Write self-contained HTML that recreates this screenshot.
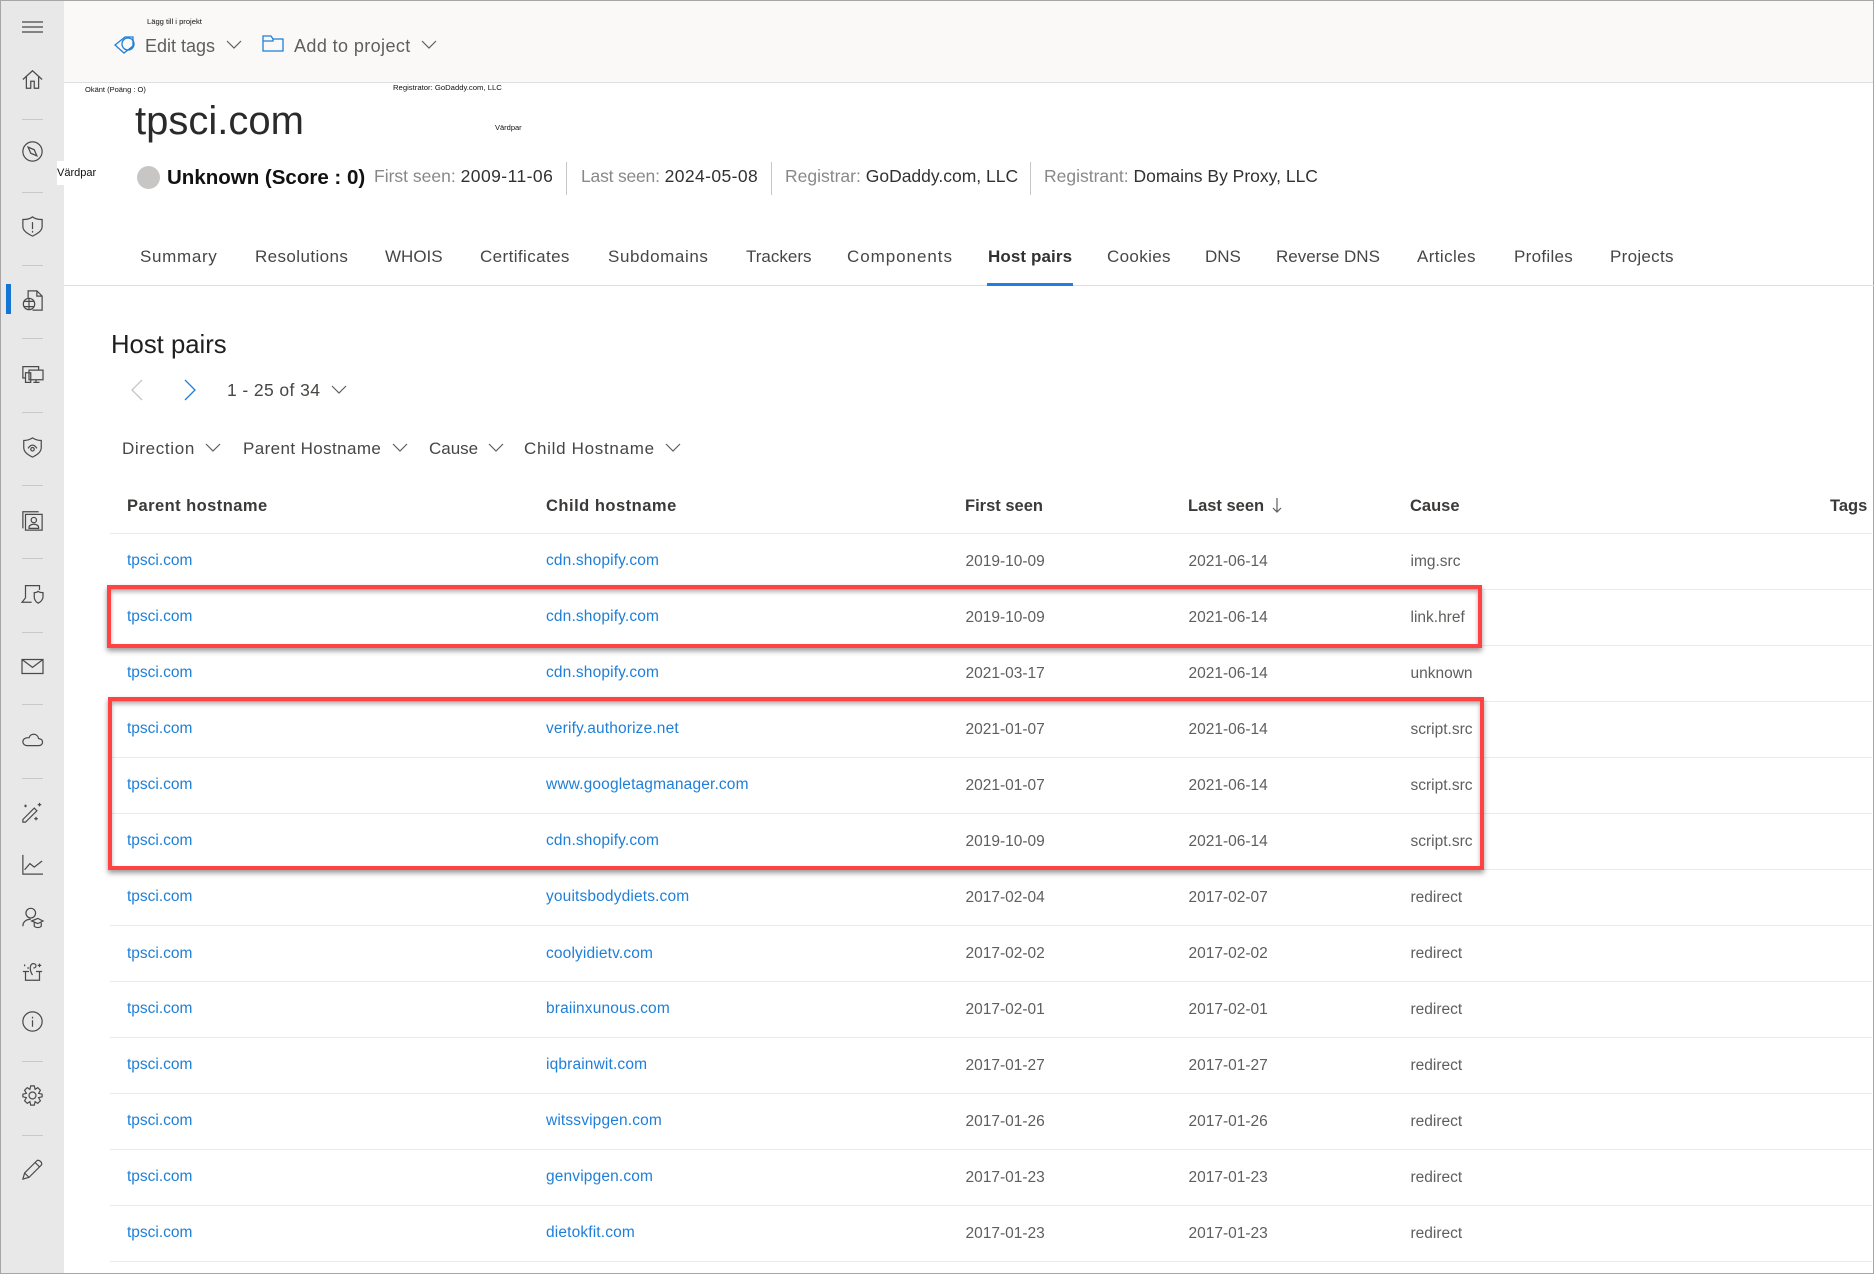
<!DOCTYPE html>
<html lang="en"><head><meta charset="utf-8"><title>tpsci.com - Host pairs</title>
<style>
html,body{margin:0;padding:0;background:#fff}
#p{position:relative;width:1874px;height:1274px;overflow:hidden;background:#fff;font-family:"Liberation Sans",sans-serif;color:#605e5c;font-size:16px}
#p>*{position:absolute}
.t{white-space:nowrap;line-height:24px;height:24px}
.h{background:#edebe9;height:1px;left:110px;width:1762px}
.l{color:#1f7fd8;font-size:15.5px;margin-top:.5px}
.ch{letter-spacing:.15px}
.g{font-size:15.5px;color:#605e5c;margin-top:1px;margin-left:.5px}
.b{font-weight:bold;color:#3b3a39;font-size:16.5px}
.n{font-size:17px;color:#484644;top:245px}
.f{font-size:17px;color:#484644;top:437px}
.d{background:#c8c8c8;height:1px;left:22px;width:21px}
svg{fill:none;stroke:#484644;stroke-width:1.3;overflow:visible}
svg.i{left:22px;stroke-width:1.4;stroke:#4a4a4a}
.c{stroke:#605e5c;stroke-width:1.2}
.r{border:4px solid #ff4343;box-shadow:0 3px 5px rgba(0,0,0,.4),inset 0 3px 4px rgba(0,0,0,.3);box-sizing:border-box}
.s{color:#8a8886}
</style></head><body><div id="p">

<div style="left:0;top:0;width:64px;height:1274px;background:#e8e8e8"></div>
<div style="left:64px;top:0;width:1810px;height:82px;background:#faf9f8;border-bottom:1px solid #e1dfdd"></div>
<div style="left:0;top:0;width:1874px;height:1px;background:#a6a6a6"></div>
<div style="left:0;top:0;width:1px;height:1274px;background:#a6a6a6"></div>
<div style="left:1873px;top:0;width:1px;height:1274px;background:#a6a6a6"></div>
<div style="left:0;top:1273px;width:1874px;height:1px;background:#a6a6a6"></div>

<!-- sidebar -->
<div style="left:6px;top:284px;width:5px;height:30px;background:#1476d2"></div>
<div class="d" style="top:119px"></div><div class="d" style="top:192px"></div><div class="d" style="top:265px"></div><div class="d" style="top:338px"></div><div class="d" style="top:412px"></div><div class="d" style="top:485px"></div><div class="d" style="top:558px"></div><div class="d" style="top:632px"></div><div class="d" style="top:704px"></div><div class="d" style="top:778px"></div><div class="d" style="top:1061px"></div><div class="d" style="top:1135px"></div>

<svg style="left:21px;top:16px" width="24" height="24"><path d="M1 6H22M1 11H22M1 16H22"/></svg>
<svg class="i" style="top:69px" width="21" height="21" viewBox="0 0 24 24"><path d="M1 12L12 2L23 12M5 9V22H10V14H14V22H19V9"/></svg>
<svg class="i" style="top:141px" width="21" height="21" viewBox="0 0 24 24"><circle cx="12" cy="12" r="11"/><path d="M7 7L14 10L17 17L10 14Z"/></svg>
<svg class="i" style="top:216px" width="21" height="21" viewBox="0 0 24 24"><path d="M12 1C15 3.500 18 4 23 4V12C23 17 18 20 12 23C6 20 1 17 1 12V4C6 4 9 3.500 12 1ZM12 7V15M12 17V19"/></svg>
<svg class="i" style="top:290px" width="21" height="21" viewBox="0 0 24 24"><path d="M7 9V1H17L23 7V23H12M17 1V7H23"/><circle cx="8" cy="16" r="6.500"/><path d="M8 9.500V22.500M2 13H14M2 19H14"/></svg>
<svg class="i" style="top:364px" width="21" height="21" viewBox="0 0 24 24"><path d="M4 16H1V3H19V7M8 7H24V18H8ZM4 10H10V21H4ZM13 21H20M16 18V21"/></svg>
<svg class="i" style="top:437px" width="21" height="21" viewBox="0 0 24 24"><path d="M12 1C15 3 18 4 22 4V12C22 17 18 20 12 23C6 20 2 17 2 12V4C6 4 9 3 12 1ZM7 13C10 8 14 8 17 13"/><circle cx="12" cy="14" r="2"/></svg>
<svg class="i" style="top:510px" width="21" height="21" viewBox="0 0 24 24"><path d="M1 21V2H19M4 5H23V23H4ZM8 20C8 15 19 15 19 20V21H8Z"/><circle cx="13.500" cy="11.500" r="3"/></svg>
<svg class="i" style="top:583px" width="21" height="21" viewBox="0 0 24 24"><path d="M4 17V3H20V8M4 17L0 22H11M14 11C16 11 18 10 18.500 9.500C19 10 21 11 24 11V16C24 19 21 22 18.500 23C16 22 14 19 14 16Z"/></svg>
<svg class="i" style="top:656px" width="21" height="21" viewBox="0 0 24 24"><path d="M0 4H24V20H0ZM0 4L12 13L24 4"/></svg>
<svg class="i" style="top:729px" width="21" height="21" viewBox="0 0 24 24"><path d="M6 19H19C25 19 25 11 19 11C18 5 10 4 8 10C-1 9 -1 19 6 19Z"/></svg>
<svg class="i" style="top:802px" width="21" height="21" viewBox="0 0 24 24"><path d="M1 20L14 7L17 10L4 23L1 23ZM4 3V6M2.500 4.500H5.500M20 1V5M18 3H22M16 17V21M14 19H18"/></svg>
<svg class="i" style="top:854px" width="21" height="21" viewBox="0 0 24 24"><path d="M1 1V23H24M3 18L9 11L14 15L23 8"/></svg>
<svg class="i" style="top:907px" width="21" height="21" viewBox="0 0 24 24"><circle cx="10" cy="7" r="5.500"/><path d="M1 22C1 16 6 14 10 14M11 16L18 13L24 16L18 19ZM14 18V22C16 24 20 24 22 22V18"/></svg>
<svg class="i" style="top:961px" width="21" height="21" viewBox="0 0 24 24"><path d="M4 12V22H20V12M1 12H8M16 12H23M12 16C8 10 9 3 13 3C17 3 17 8 13 8M3 4V6M20 3V7M18 5H22M6 8H8"/></svg>
<svg class="i" style="top:1011px" width="21" height="21" viewBox="0 0 24 24"><circle cx="12" cy="12" r="11"/><path d="M12 10.500V18M12 6.500V8.500"/></svg>
<svg class="i" style="top:1085px" width="21" height="21" viewBox="0 0 24 24"><circle cx="12" cy="12" r="4"/><path d="M10 1H14L15 5L18 3L21 6L19 9.500L23 10.500V13.500L19 14.500L21 18L18 21L15 19L14 23H10L9 19L6 21L3 18L5 14.500L1 13.500V10.500L5 9.500L3 6L6 3L9 5Z"/></svg>
<svg class="i" style="top:1159px" width="21" height="21" viewBox="0 0 24 24"><path d="M1 23L3 16L17 2C19 0 24 4 22 7L8 21ZM3 16L8 21M15 4L20 9"/></svg>

<!-- top commands -->
<div class="t" style="left:147px;top:10px;font-size:7.600px;color:#111">Lägg till i projekt</div>
<svg style="left:114px;top:35px;stroke:#1f7fd8" width="21" height="20"><path d="M1 10L11 2H19V11L10 18Z"/><circle cx="14" cy="9" r="6"/></svg>
<div class="t" style="left:145px;top:34px;font-size:18px;color:#605e5c">Edit tags</div>
<svg class="c" style="left:226px;top:40px" width="16" height="10"><path d="M1 1L8 8L15 1"/></svg>
<svg style="left:262px;top:35px;stroke:#1f7fd8" width="22" height="18"><path d="M1 1H9L11 4H21V16H1ZM1 6H11L11 4"/></svg>
<div class="t" style="left:294px;top:34px;font-size:18px;color:#605e5c;letter-spacing:.4px">Add to project</div>
<svg class="c" style="left:421px;top:40px" width="16" height="10"><path d="M1 1L8 8L15 1"/></svg>

<!-- tiny labels -->
<div class="t" style="left:85px;top:78px;font-size:7.500px;color:#111">Okänt (Poäng : O)</div>
<div class="t" style="left:393px;top:76px;font-size:7.700px;color:#111">Registrator: GoDaddy.com, LLC</div>
<div class="t" style="left:495px;top:116px;font-size:7.500px;color:#111">Värdpar</div>
<div class="t" style="left:57px;top:161px;font-size:11px;color:#111;background:#fff;width:7px;overflow:visible">Värdpar</div>

<!-- title -->
<div class="t" style="left:135px;top:96px;font-size:40px;line-height:50px;height:50px;color:#2a2a2a">tpsci.com</div>
<div style="left:137px;top:166px;width:23px;height:23px;border-radius:50%;background:#c8c6c4"></div>
<div class="t" style="left:167px;top:166px;font-size:20.500px;font-weight:bold;color:#111">Unknown (Score : 0)</div>
<div class="t" style="left:374px;top:164px;font-size:17.500px;color:#323130"><span class="s">First seen:</span> <span style="letter-spacing:.45px">2009-11-06</span></div>
<div style="left:566px;top:162px;width:1px;height:33px;background:#c8c6c4"></div>
<div class="t" style="left:581px;top:164px;font-size:17.500px;color:#323130"><span class="s" style="letter-spacing:-.2px">Last seen:</span> <span style="letter-spacing:.4px">2024-05-08</span></div>
<div style="left:771px;top:162px;width:1px;height:33px;background:#c8c6c4"></div>
<div class="t" style="left:785px;top:164px;font-size:17.500px;color:#323130"><span class="s">Registrar:</span> GoDaddy.com, LLC</div>
<div style="left:1030px;top:162px;width:1px;height:33px;background:#c8c6c4"></div>
<div class="t" style="left:1044px;top:164px;font-size:17.500px;color:#323130"><span class="s">Registrant:</span> Domains By Proxy, LLC</div>

<!-- tabs -->
<div class="t n" style="left:140px;letter-spacing:.68px">Summary</div>
<div class="t n" style="left:255px;letter-spacing:.4px">Resolutions</div>
<div class="t n" style="left:385px">WHOIS</div>
<div class="t n" style="left:480px;letter-spacing:.4px">Certificates</div>
<div class="t n" style="left:608px;letter-spacing:.6px">Subdomains</div>
<div class="t n" style="left:746px">Trackers</div>
<div class="t n" style="left:847px;letter-spacing:.95px">Components</div>
<div class="t n" style="left:988px;font-weight:bold;color:#323130;letter-spacing:.1px">Host pairs</div>
<div class="t n" style="left:1107px;letter-spacing:.35px">Cookies</div>
<div class="t n" style="left:1205px">DNS</div>
<div class="t n" style="left:1276px">Reverse DNS</div>
<div class="t n" style="left:1417px;letter-spacing:.4px">Articles</div>
<div class="t n" style="left:1514px;letter-spacing:.3px">Profiles</div>
<div class="t n" style="left:1610px;letter-spacing:.3px">Projects</div>
<div style="left:64px;top:285px;width:1810px;height:1px;background:#e1dfdd"></div>
<div style="left:987px;top:283px;width:86px;height:3px;background:#1f7fe0"></div>

<!-- section -->
<div class="t" style="left:111px;top:331px;font-size:25.700px;line-height:28px;height:28px;color:#1f1f1f">Host pairs</div>
<svg style="left:131px;top:379px;stroke:#c8c6c4" width="12" height="22"><path d="M11 1L1 11L11 21"/></svg>
<svg style="left:184px;top:379px;stroke:#1f7fd8" width="12" height="22"><path d="M1 1L11 11L1 21"/></svg>
<div class="t" style="left:227px;top:378px;font-size:17.500px;color:#484644;letter-spacing:.4px">1 - 25 of 34</div>
<svg class="c" style="left:331px;top:385px" width="16" height="10"><path d="M1 1L8 8L15 1"/></svg>

<div class="t f" style="left:122px;letter-spacing:.65px">Direction</div>
<svg class="c" style="left:205px;top:443px" width="16" height="10"><path d="M1 1L8 8L15 1"/></svg>
<div class="t f" style="left:243px;letter-spacing:.4px">Parent Hostname</div>
<svg class="c" style="left:392px;top:443px" width="16" height="10"><path d="M1 1L8 8L15 1"/></svg>
<div class="t f" style="left:429px">Cause</div>
<svg class="c" style="left:488px;top:443px" width="16" height="10"><path d="M1 1L8 8L15 1"/></svg>
<div class="t f" style="left:524px;letter-spacing:.7px">Child Hostname</div>
<svg class="c" style="left:665px;top:443px" width="16" height="10"><path d="M1 1L8 8L15 1"/></svg>

<!-- table head -->
<div class="t b" style="left:127px;top:494px;letter-spacing:.45px">Parent hostname</div>
<div class="t b" style="left:546px;top:494px;letter-spacing:.5px">Child hostname</div>
<div class="t b" style="left:965px;top:494px">First seen</div>
<div class="t b" style="left:1188px;top:494px">Last seen</div>
<svg class="c" style="left:1272px;top:497px" width="10" height="17"><path d="M5 1V15M1 11L5 15L9 11"/></svg>
<div class="t b" style="left:1410px;top:494px">Cause</div>
<div class="t b" style="left:1830px;top:494px">Tags</div>

<div class="h" style="top:533px"></div><div class="h" style="top:589px"></div><div class="h" style="top:645px"></div><div class="h" style="top:701px"></div><div class="h" style="top:757px"></div><div class="h" style="top:813px"></div><div class="h" style="top:869px"></div><div class="h" style="top:925px"></div><div class="h" style="top:981px"></div><div class="h" style="top:1037px"></div><div class="h" style="top:1093px"></div><div class="h" style="top:1149px"></div><div class="h" style="top:1205px"></div><div class="h" style="top:1261px"></div>

<!-- rows -->
<div class="t l" style="left:127px;top:548px">tpsci.com</div><div class="t l ch" style="left:546px;top:548px">cdn.shopify.com</div><div class="t g" style="left:965px;top:549px">2019-10-09</div><div class="t g" style="left:1188px;top:549px">2021-06-14</div><div class="t g" style="left:1410px;top:549px">img.src</div>
<div class="t l" style="left:127px;top:604px">tpsci.com</div><div class="t l ch" style="left:546px;top:604px">cdn.shopify.com</div><div class="t g" style="left:965px;top:605px">2019-10-09</div><div class="t g" style="left:1188px;top:605px">2021-06-14</div><div class="t g" style="left:1410px;top:605px">link.href</div>
<div class="t l" style="left:127px;top:660px">tpsci.com</div><div class="t l ch" style="left:546px;top:660px">cdn.shopify.com</div><div class="t g" style="left:965px;top:661px">2021-03-17</div><div class="t g" style="left:1188px;top:661px">2021-06-14</div><div class="t g" style="left:1410px;top:661px">unknown</div>
<div class="t l" style="left:127px;top:716px">tpsci.com</div><div class="t l ch" style="left:546px;top:716px">verify.authorize.net</div><div class="t g" style="left:965px;top:717px">2021-01-07</div><div class="t g" style="left:1188px;top:717px">2021-06-14</div><div class="t g" style="left:1410px;top:717px">script.src</div>
<div class="t l" style="left:127px;top:772px">tpsci.com</div><div class="t l ch" style="left:546px;top:772px">www.googletagmanager.com</div><div class="t g" style="left:965px;top:773px">2021-01-07</div><div class="t g" style="left:1188px;top:773px">2021-06-14</div><div class="t g" style="left:1410px;top:773px">script.src</div>
<div class="t l" style="left:127px;top:828px">tpsci.com</div><div class="t l ch" style="left:546px;top:828px">cdn.shopify.com</div><div class="t g" style="left:965px;top:829px">2019-10-09</div><div class="t g" style="left:1188px;top:829px">2021-06-14</div><div class="t g" style="left:1410px;top:829px">script.src</div>
<div class="t l" style="left:127px;top:884px">tpsci.com</div><div class="t l ch" style="left:546px;top:884px">youitsbodydiets.com</div><div class="t g" style="left:965px;top:885px">2017-02-04</div><div class="t g" style="left:1188px;top:885px">2017-02-07</div><div class="t g" style="left:1410px;top:885px">redirect</div>
<div class="t l" style="left:127px;top:941px">tpsci.com</div><div class="t l ch" style="left:546px;top:941px">coolyidietv.com</div><div class="t g" style="left:965px;top:941px">2017-02-02</div><div class="t g" style="left:1188px;top:941px">2017-02-02</div><div class="t g" style="left:1410px;top:941px">redirect</div>
<div class="t l" style="left:127px;top:996px">tpsci.com</div><div class="t l ch" style="left:546px;top:996px">braiinxunous.com</div><div class="t g" style="left:965px;top:997px">2017-02-01</div><div class="t g" style="left:1188px;top:997px">2017-02-01</div><div class="t g" style="left:1410px;top:997px">redirect</div>
<div class="t l" style="left:127px;top:1052px">tpsci.com</div><div class="t l ch" style="left:546px;top:1052px">iqbrainwit.com</div><div class="t g" style="left:965px;top:1053px">2017-01-27</div><div class="t g" style="left:1188px;top:1053px">2017-01-27</div><div class="t g" style="left:1410px;top:1053px">redirect</div>
<div class="t l" style="left:127px;top:1108px">tpsci.com</div><div class="t l ch" style="left:546px;top:1108px">witssvipgen.com</div><div class="t g" style="left:965px;top:1109px">2017-01-26</div><div class="t g" style="left:1188px;top:1109px">2017-01-26</div><div class="t g" style="left:1410px;top:1109px">redirect</div>
<div class="t l" style="left:127px;top:1164px">tpsci.com</div><div class="t l ch" style="left:546px;top:1164px">genvipgen.com</div><div class="t g" style="left:965px;top:1165px">2017-01-23</div><div class="t g" style="left:1188px;top:1165px">2017-01-23</div><div class="t g" style="left:1410px;top:1165px">redirect</div>
<div class="t l" style="left:127px;top:1220px">tpsci.com</div><div class="t l ch" style="left:546px;top:1220px">dietokfit.com</div><div class="t g" style="left:965px;top:1221px">2017-01-23</div><div class="t g" style="left:1188px;top:1221px">2017-01-23</div><div class="t g" style="left:1410px;top:1221px">redirect</div>

<!-- red boxes -->
<div class="r" style="left:107px;top:585px;width:1375px;height:63px"></div>
<div class="r" style="left:108px;top:697px;width:1376px;height:173px"></div>
</div></body></html>
